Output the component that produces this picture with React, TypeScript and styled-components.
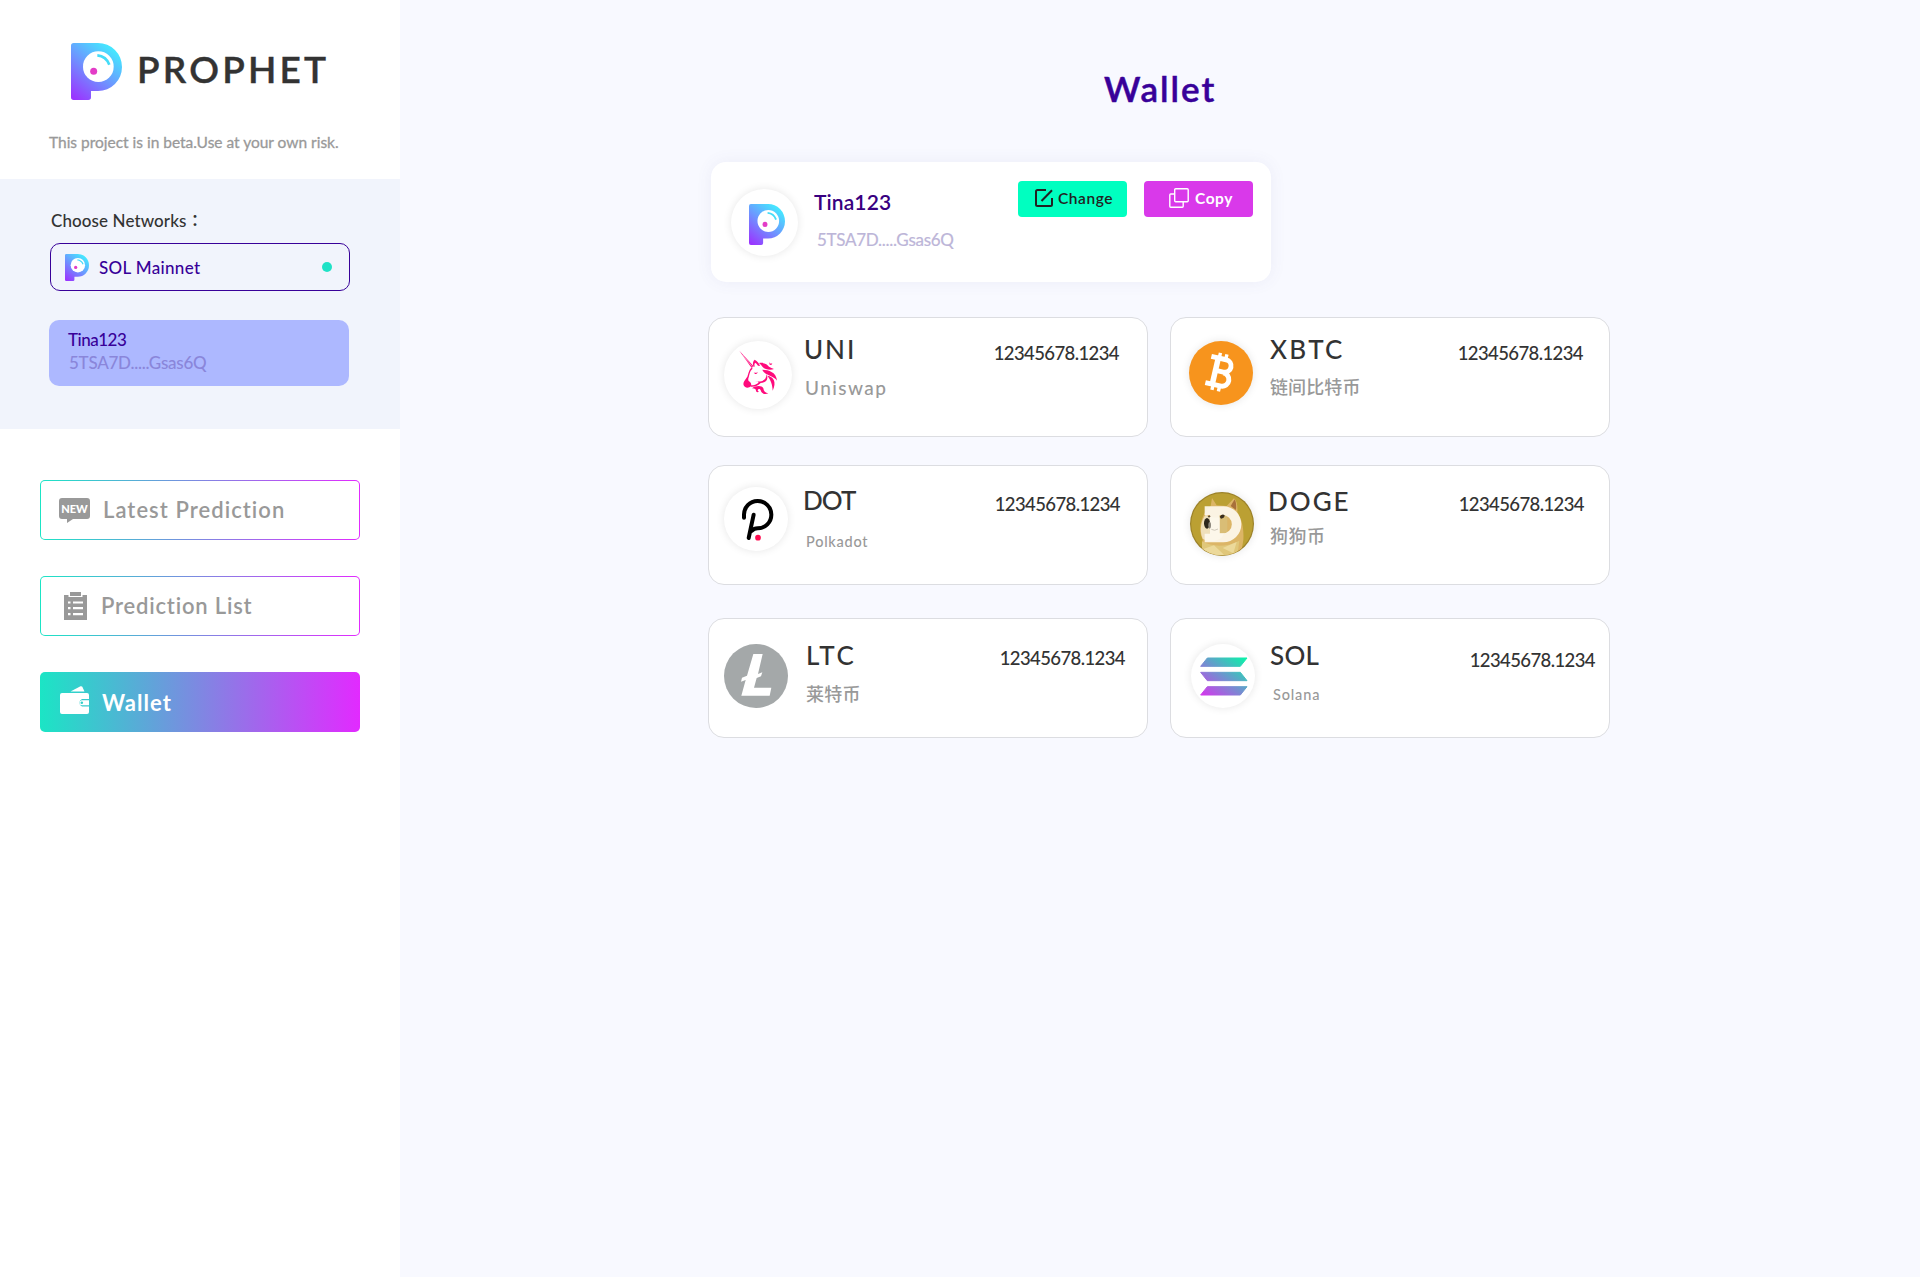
import React from 'react';
import styled, { createGlobalStyle } from 'styled-components';

const GlobalStyle = createGlobalStyle`
  * { box-sizing: border-box; }
  body {
    margin: 0;
    background: #f8f9ff;
    font-family: Lato, 'Noto Sans CJK SC', sans-serif;
    color: #333;
  }
`;

const Page = styled.div`
  display: flex;
  min-height: 1277px;
`;

const Sidebar = styled.aside`
  width: 400px;
  flex: none;
  background: #fff;
`;

const Header = styled.header`
  height: 179px;
  padding: 43px 0 0 49px;
`;

const Brand = styled.div`
  display: flex;
  padding-left: 22px;
  height: 57px;
`;

const BrandName = styled.h1`
  margin: 7px 0 0 15px;
  font-size: 37px;
  line-height: 38px;
  font-weight: 600;
  letter-spacing: 3.2px;
  color: #333;
  -webkit-text-stroke: 0.4px #333;
`;

const Tagline = styled.p`
  margin: 32px 0 0;
  font-size: 15.5px;
  line-height: 20px;
  letter-spacing: -0.01px;
  color: #999;
  -webkit-text-stroke: 0.3px #999;
  white-space: nowrap;
`;

const NetworkPanel = styled.section`
  height: 250px;
  padding: 30px 0 0 49px;
  background: #f1f4fc;
`;

const NetworkLabel = styled.div`
  padding-left: 2px;
  font-family: Lato, 'Noto Sans CJK TC', sans-serif;
  font-size: 17px;
  line-height: 24px;
  font-weight: 500;
  letter-spacing: 0.1px;
  white-space: nowrap;
`;

const NetworkSelect = styled.div`
  display: flex;
  align-items: center;
  width: 300px;
  height: 48px;
  margin: 10px 0 0 1px;
  padding: 0 17px 0 14px;
  border: 1px solid #380199;
  border-radius: 10px;
  color: #380199;
  font-size: 17px;
  font-weight: 500;
  letter-spacing: 0.33px;
`;

const NetworkName = styled.span`
  flex: 1;
  margin-left: 10px;
`;

const StatusDot = styled.span`
  width: 10px;
  height: 10px;
  border-radius: 50%;
  background: #1fe2c6;
`;

const AccountBox = styled.div`
  width: 300px;
  height: 66px;
  margin-top: 29px;
  padding: 8px 0 0 19px;
  border-radius: 10px;
  background: #adb8ff;
  font-size: 17px;
  line-height: 23px;
`;

const AccountName = styled.div`
  color: #380199;
  font-weight: 500;
  letter-spacing: -0.5px;
`;

const AccountAddress = styled.div`
  padding-left: 1px;
  color: #8a86da;
  font-weight: 500;
  letter-spacing: -0.25px;
`;

const Nav = styled.nav`
  display: flex;
  flex-direction: column;
  gap: 36px;
  padding: 51px 40px 0;
`;

const NavItem = styled.a<{ $active?: boolean }>`
  display: flex;
  align-items: center;
  height: 60px;
  padding-left: 18px;
  border: 1px solid transparent;
  border-radius: 5px;
  color: ${(p) => (p.$active ? '#fff' : '#999')};
  font-size: 22px;
  font-weight: ${(p) => (p.$active ? 700 : 600)};
  background: ${(p) =>
    p.$active
      ? 'linear-gradient(90deg, #1be5c5, #e22aff) border-box'
      : 'linear-gradient(#fff, #fff) padding-box, linear-gradient(90deg, #1be5c5, #e22aff) border-box'};
`;

const NavIcon = styled.span<{ $gap: number; $indent?: number; $lift?: number }>`
  display: flex;
  margin-left: ${(p) => p.$indent ?? 0}px;
  margin-right: ${(p) => p.$gap}px;
  padding-bottom: ${(p) => p.$lift ?? 0}px;
`;

const NavLabel = styled.span<{ $spacing: number; $lift: number }>`
  padding-bottom: ${(p) => p.$lift}px;
  letter-spacing: ${(p) => p.$spacing}px;
`;

const Main = styled.main`
  width: 902px;
  margin-left: 308px;
  padding-top: 67px;
`;

const Title = styled.h2`
  margin: 0 0 0 396px;
  font-size: 35px;
  line-height: 42px;
  font-weight: 600;
  letter-spacing: 2px;
  color: #380199;
  -webkit-text-stroke: 0.5px #380199;
`;

const ProfileCard = styled.section`
  display: flex;
  width: 560px;
  height: 120px;
  margin: 53px 0 35px 3px;
  padding: 19px 18px 0 20px;
  border-radius: 15px;
  background: #fff;
  box-shadow: 0 0 16px rgba(90, 90, 150, 0.08);
`;

const Disc = styled.div<{ $size: number; $shadow?: boolean; $bg?: string }>`
  display: flex;
  flex: none;
  align-items: center;
  justify-content: center;
  width: ${(p) => p.$size}px;
  height: ${(p) => p.$size}px;
  border-radius: 50%;
  background: ${(p) => p.$bg ?? '#fff'};
  box-shadow: ${(p) => (p.$shadow === false ? 'none' : '0 0 8px rgba(0, 0, 0, 0.1)')};
`;

const ProfileDisc = styled(Disc)`
  margin-top: 8px;
  padding-left: 4px;
  padding-top: 4px;
`;

const ProfileText = styled.div`
  flex: 1;
  margin-left: 16px;
  padding-top: 8px;
`;

const ProfileName = styled.div`
  font-size: 21px;
  line-height: 26px;
  font-weight: 600;
  letter-spacing: 0.1px;
  color: #380080;
`;

const ProfileAddress = styled.div`
  margin: 13px 0 0 3px;
  font-size: 17px;
  line-height: 24px;
  letter-spacing: -0.28px;
  color: #bcb5d8;
  -webkit-text-stroke: 0.2px #bcb5d8;
`;

const ActionButton = styled.button<{ $bg: string; $color: string; $left: number; $gap: number; $weight: number }>`
  display: flex;
  align-items: center;
  width: 109px;
  height: 36px;
  margin-left: 17px;
  padding: 0 0 3px ${(p) => p.$left}px;
  gap: ${(p) => p.$gap}px;
  border: 0;
  border-radius: 4px;
  background: ${(p) => p.$bg};
  color: ${(p) => p.$color};
  font: ${(p) => p.$weight} 15.5px/20px Lato, sans-serif;
  letter-spacing: 0.55px;
`;

const TokenGrid = styled.div`
  display: grid;
  grid-template-columns: 440px 440px;
  grid-template-rows: 148px 153px 120px;
  column-gap: 22px;
`;

const TokenCard = styled.article`
  display: flex;
  align-items: flex-start;
  height: 120px;
  border: 1px solid #dcdde1;
  border-radius: 16px;
  background: #fff;
`;

const TokenIcon = styled.div<{ $left: number; $top: number }>`
  margin: ${(p) => p.$top}px 0 0 ${(p) => p.$left}px;
`;

const TokenText = styled.div<{ $left: number; $top: number }>`
  flex: 1;
  margin: ${(p) => p.$top}px 0 0 ${(p) => p.$left}px;
  white-space: nowrap;
`;

const Symbol = styled.h3<{ $spacing: number }>`
  margin: 0;
  font-size: 26px;
  line-height: 30px;
  font-weight: 500;
  letter-spacing: ${(p) => p.$spacing}px;
`;

const TokenName = styled.div<{ $top: number; $size: number; $spacing: number; $indent: number }>`
  margin-top: ${(p) => p.$top}px;
  padding-left: ${(p) => p.$indent}px;
  font-size: ${(p) => p.$size}px;
  line-height: 24px;
  font-weight: 500;
  letter-spacing: ${(p) => p.$spacing}px;
  color: #999;
`;

const Amount = styled.div<{ $top: number; $right: number }>`
  margin: ${(p) => p.$top}px ${(p) => p.$right}px 0 0;
  font-size: 18.5px;
  line-height: 24px;
  font-weight: 500;
  letter-spacing: -0.6px;
`;

function ProphetMark({ width, height, id }: { width: number; height: number; id: string }) {
  return (
    <svg width={width} height={height} viewBox="0 0 153 171" preserveAspectRatio="none">
      <defs>
        <linearGradient id={id} x1="10" y1="165" x2="125" y2="20" gradientUnits="userSpaceOnUse">
          <stop offset="0" stopColor="#9a35ff" />
          <stop offset="0.55" stopColor="#6c98ff" />
          <stop offset="1" stopColor="#45e6ff" />
        </linearGradient>
      </defs>
      <path
        d="M8 0H81A72 72 0 0 1 81 144H60V163A8 8 0 0 1 52 171H8A8 8 0 0 1 0 163V8A8 8 0 0 1 8 0Z"
        fill={`url(#${id})`}
      />
      <circle cx="82" cy="71" r="46" fill="#fff" />
      <circle cx="68" cy="85" r="10.5" fill="#e33cc7" />
      <path d="M79 37Q105 39 115 65" fill="none" stroke="#45dcf8" strokeWidth="8" />
    </svg>
  );
}

function NewIcon() {
  return (
    <svg width="31" height="25" viewBox="0 0 31 25" overflow="visible">
      <path d="M3 0H28A3 3 0 0 1 31 3V18A3 3 0 0 1 28 21H14L8 25V21H3A3 3 0 0 1 0 18V3A3 3 0 0 1 3 0Z" fill="#999" />
      <text
        x="2.2"
        y="14.8"
        fill="#fff"
        fontFamily="Lato, sans-serif"
        fontSize="12"
        fontWeight="900"
        textLength="26.6"
        lengthAdjust="spacingAndGlyphs"
      >
        NEW
      </text>
    </svg>
  );
}

function ListIcon() {
  return (
    <svg width="23" height="28" viewBox="0 0 23 28">
      <path d="M0 3H4.5V5H18.5V3H23V28H0Z" fill="#999" />
      <path d="M6 0H17V4H6Z" fill="#999" />
      <g fill="#fff">
        <path d="M4 9.4H6.5V11.6H4ZM4 15H6.5V17.2H4ZM4 21H6.5V23.2H4Z" />
        <path d="M9 9.4H19V11.6H9ZM9 15H19V17.2H9ZM9 21H19V23.2H9Z" />
      </g>
    </svg>
  );
}

function WalletIcon() {
  return (
    <svg width="29" height="28" viewBox="0 0 29 28" fill="#fff">
      <path d="M10.5 5.5L20.5 0.3Q21.7 -0.2 22.3 0.8L24.5 5.5Z" />
      <path
        d="M2 7H27A2 2 0 0 1 29 9V13H22A4 4 0 0 0 22 20.5H29V26A2 2 0 0 1 27 28H2A2 2 0 0 1 0 26V9A2 2 0 0 1 2 7Z"
      />
      <path d="M22 14.2H29V19.2H22A2.5 2.5 0 0 1 22 14.2Z" />
      <circle cx="21.8" cy="16.7" r="1.3" fill="#2fd0ca" />
    </svg>
  );
}

function ChangeIcon() {
  return (
    <svg width="18" height="18" viewBox="0 0 18 18" fill="none" stroke="#222" strokeWidth="2">
      <path d="M11 1H2.5Q1 1 1 2.5V15.5Q1 17 2.5 17H15.5Q17 17 17 15.5V9" />
      <path d="M6.5 12L17 1.2" />
    </svg>
  );
}

function CopyIcon() {
  return (
    <svg width="20" height="20" viewBox="0 0 20 20" fill="none" stroke="#fff" strokeWidth="1.4">
      <rect x="5.7" y="0.8" width="13.5" height="13" rx="1" />
      <path d="M5.5 6H1.7Q0.8 6 0.8 7V18.2Q0.8 19.2 1.7 19.2H13.3Q14.2 19.2 14.2 18.2V14" />
    </svg>
  );
}

function UniswapIcon() {
  return (
    <svg width="68" height="68" viewBox="18 18 204 204" fill="#ff0a7c">
      <path d="M64 47L107 94L101 99Z" />
      <path d="M74 60L103 95" stroke="#fff" strokeWidth="1.5" />
      <path d="M106 94C103 84 106 77 110 74C118 78 124 86 126 93L120 92C117 87 114 84 111 83Q108 88 110 95Z" />
      <path d="M123 84C139 82 148 88 153 95Q160 99 168 102C158 107 141 104 134 96Q130 90 123 84Z" />
      <path d="M154 82L158 86L163 85L160 90L155 89Z" />
      <path d="M133 104C152 104 176 112 177 137C168 124 148 122 138 112Q134 108 133 104Z" />
      <path d="M148 122C166 125 177 140 164 167C163 148 159 136 148 122Z" />
      <path d="M101 98C92 104 92 116 88 125C82 134 74 141 77 151C81 160 93 160 99 153Q102 144 92 138Q90 136 91 130C95 120 94 108 104 101Z" />
      <path d="M98 151C108 151 116 148 122 143Q118 138 112 139C130 142 145 137 146 117C153 137 141 142 128 144C122 151 110 156 98 155Z" />
      <path d="M107 112Q114 116 119 110Q118 119 111 117Z" />
      <path d="M102 160C112 151 132 150 136 160C137 169 142 174 151 175C139 180 130 175 128 166C125 159 117 163 120 169L123 169C119 176 112 169 114 164Q109 160 102 160Z" />
    </svg>
  );
}

function BitcoinIcon() {
  return (
    <svg width="64" height="64" viewBox="0 0 64 64">
      <g transform="rotate(13 32 32) translate(1.3 1.6) scale(0.95)" fill="none" stroke="#fff">
        <path
          d="M18.5 17.2H34.5A6.3 6.3 0 0 1 34.5 30.5H26.5M34.5 31.3A7 7 0 0 1 35.5 45.5H18.5"
          strokeWidth="5.2"
        />
        <path d="M26 17V46" strokeWidth="5.8" />
        <path d="M27 11.5V18M34 11.5V18M27 45V51.5M34 45V51.5" strokeWidth="3.6" />
      </g>
    </svg>
  );
}

function PolkadotIcon() {
  return (
    <svg width="64" height="64" viewBox="0 0 192 192" fill="none" strokeLinecap="round" strokeWidth="12">
      <path d="M60 92V84A41 41 0 1 1 101 124Q90 124 83 132" stroke="#000" />
      <path d="M89 83L74 153" stroke="#000" />
      <circle cx="102" cy="152" r="8.5" fill="#ff0c50" />
    </svg>
  );
}

function DogeIcon() {
  return (
    <svg width="64" height="64" viewBox="18 18 192 192">
      <clipPath id="doge-clip">
        <circle cx="114" cy="114" r="94" />
      </clipPath>
      <circle cx="114" cy="114" r="96" fill="#9b8129" />
      <circle cx="114" cy="114" r="92.5" fill="#bba033" />
      <g clipPath="url(#doge-clip)">
        <path
          d="M52 210L56 160C42 132 50 105 62 80L80 60L84 36L98 58L128 60L150 37Q162 48 160 78C176 104 180 134 178 162L170 210Z"
          fill="#dcb566"
        />
        <path d="M140 60L152 40Q158 50 156 72Z" fill="#a8703a" />
        <path d="M56 158C44 128 54 100 66 84C82 100 98 92 110 96C128 104 128 134 112 156C96 168 72 168 56 158Z" fill="#efe0bb" />
        <path d="M107 86H130V142H107Z" fill="#d9bd76" />
        <path d="M54 166C82 182 124 186 166 164L160 210H54Z" fill="#e0c77a" />
        <path d="M56 190L90 178L120 206L84 212ZM116 186L158 168L148 202Z" fill="#ecd99a" />
      </g>
      <path
        d="M62 61H118A54 54 0 0 1 118 169H62V143H78V87H62ZM107 87V142H116A27.5 27.5 0 0 0 116 87Z"
        fill="#fdf9ee"
        fillOpacity="0.92"
        fillRule="evenodd"
      />
      <ellipse cx="69" cy="112" rx="9" ry="16" fill="#2c271c" />
      <ellipse cx="77" cy="118" rx="4" ry="10" fill="#8d887c" />
      <path d="M71 91Q76 86 80 91L75 95Z" fill="#5b4a34" />
      <path d="M107 92Q115 82 122 88Q121 98 111 98Z" fill="#3a2d1c" />
      <path d="M82 130Q92 136 102 129" stroke="#cfc8ba" strokeWidth="3" fill="none" />
    </svg>
  );
}

function LitecoinIcon() {
  return (
    <svg width="64" height="64" viewBox="0 0 192 192">
      <path
        d="M88 30H116L102 90L115 85L111 97L98 102L90 131H142L137 155H52L65 108L51 113L54 101L69 95Z"
        fill="#fff"
      />
    </svg>
  );
}

function SolanaIcon() {
  return (
    <svg width="64" height="64" viewBox="0 0 192 192">
      <defs>
        <linearGradient id="sol-fill" x1="48" y1="165" x2="150" y2="32" gradientUnits="userSpaceOnUse">
          <stop offset="0" stopColor="#d437ec" />
          <stop offset="0.5" stopColor="#6f93cf" />
          <stop offset="1" stopColor="#0bf2a9" />
        </linearGradient>
      </defs>
      <g fill="url(#sol-fill)" stroke="url(#sol-fill)" strokeWidth="3" strokeLinejoin="round">
        <path d="M49 42H168L148 67H29ZM29 85H148L168 110H49ZM49 128H168L148 153H29Z" />
      </g>
    </svg>
  );
}

interface Token {
  symbol: string;
  name: string;
  icon: React.ReactNode;
  size: number;
  bg?: string;
  shadow?: boolean;
  iconPos: [number, number];
  textPos: [number, number];
  spacing: number;
  nameTop: number;
  nameSize: number;
  nameSpacing: number;
  nameIndent: number;
  amountPos: [number, number];
}

const tokens: Token[] = [
  { symbol: 'UNI', name: 'Uniswap', icon: <UniswapIcon />, size: 68, iconPos: [15, 23], textPos: [12, 16], spacing: 1.9, nameTop: 12, nameSize: 19, nameSpacing: 1.45, nameIndent: 1, amountPos: [23, 28] },
  { symbol: 'XBTC', name: '链间比特币', icon: <BitcoinIcon />, size: 64, bg: '#f7941d', iconPos: [18, 23], textPos: [17, 16], spacing: 2.3, nameTop: 11, nameSize: 18, nameSpacing: 0.1, nameIndent: 0, amountPos: [23, 26] },
  { symbol: 'DOT', name: 'Polkadot', icon: <PolkadotIcon />, size: 64, iconPos: [15, 21], textPos: [15, 19], spacing: -0.9, nameTop: 15, nameSize: 14.5, nameSpacing: 0.75, nameIndent: 3, amountPos: [26, 27] },
  { symbol: 'DOGE', name: '狗狗币', icon: <DogeIcon />, size: 64, iconPos: [19, 26], textPos: [14, 20], spacing: 2, nameTop: 8, nameSize: 18, nameSpacing: 0.5, nameIndent: 2, amountPos: [26, 25] },
  { symbol: 'LTC', name: '莱特币', icon: <LitecoinIcon />, size: 64, bg: '#a4a8a9', shadow: false, iconPos: [15, 25], textPos: [18, 21], spacing: 2.4, nameTop: 12, nameSize: 18, nameSpacing: 0.2, nameIndent: 0, amountPos: [27, 22] },
  { symbol: 'SOL', name: 'Solana', icon: <SolanaIcon />, size: 64, iconPos: [20, 25], textPos: [15, 21], spacing: 0.3, nameTop: 13, nameSize: 14.5, nameSpacing: 0.85, nameIndent: 3, amountPos: [29, 14] },
];

export default function App() {
  return (
    <>
      <GlobalStyle />
      <Page>
        <Sidebar>
          <Header>
            <Brand>
              <ProphetMark width={51} height={57} id="brand-mark" />
              <BrandName>PROPHET</BrandName>
            </Brand>
            <Tagline>This project is in beta.Use at your own risk.</Tagline>
          </Header>
          <NetworkPanel>
            <NetworkLabel>Choose Networks：</NetworkLabel>
            <NetworkSelect>
              <ProphetMark width={24} height={27} id="network-mark" />
              <NetworkName>SOL Mainnet</NetworkName>
              <StatusDot />
            </NetworkSelect>
            <AccountBox>
              <AccountName>Tina123</AccountName>
              <AccountAddress>5TSA7D.....Gsas6Q</AccountAddress>
            </AccountBox>
          </NetworkPanel>
          <Nav>
            <NavItem>
              <NavIcon $gap={13}><NewIcon /></NavIcon>
              <NavLabel $spacing={1.05} $lift={1}>Latest Prediction</NavLabel>
            </NavItem>
            <NavItem>
              <NavIcon $indent={5} $gap={14}><ListIcon /></NavIcon>
              <NavLabel $spacing={0.8} $lift={1}>Prediction List</NavLabel>
            </NavItem>
            <NavItem $active>
              <NavIcon $indent={1} $gap={13} $lift={4}><WalletIcon /></NavIcon>
              <NavLabel $spacing={1.05} $lift={0}>Wallet</NavLabel>
            </NavItem>
          </Nav>
        </Sidebar>
        <Main>
          <Title>Wallet</Title>
          <ProfileCard>
            <ProfileDisc $size={67}>
              <ProphetMark width={36} height={41} id="profile-mark" />
            </ProfileDisc>
            <ProfileText>
              <ProfileName>Tina123</ProfileName>
              <ProfileAddress>5TSA7D.....Gsas6Q</ProfileAddress>
            </ProfileText>
            <ActionButton $bg="#00ffc0" $color="#222" $left={17} $gap={5} $weight={600}>
              <ChangeIcon />
              Change
            </ActionButton>
            <ActionButton $bg="#d939ea" $color="#fff" $left={25} $gap={6} $weight={700}>
              <CopyIcon />
              Copy
            </ActionButton>
          </ProfileCard>
          <TokenGrid>
            {tokens.map((t) => (
              <TokenCard key={t.symbol}>
                <TokenIcon $left={t.iconPos[0]} $top={t.iconPos[1]}>
                  <Disc $size={t.size} $bg={t.bg} $shadow={t.shadow}>{t.icon}</Disc>
                </TokenIcon>
                <TokenText $left={t.textPos[0]} $top={t.textPos[1]}>
                  <Symbol $spacing={t.spacing}>{t.symbol}</Symbol>
                  <TokenName $top={t.nameTop} $size={t.nameSize} $spacing={t.nameSpacing} $indent={t.nameIndent}>
                    {t.name}
                  </TokenName>
                </TokenText>
                <Amount $top={t.amountPos[0]} $right={t.amountPos[1]}>12345678.1234</Amount>
              </TokenCard>
            ))}
          </TokenGrid>
        </Main>
      </Page>
    </>
  );
}
